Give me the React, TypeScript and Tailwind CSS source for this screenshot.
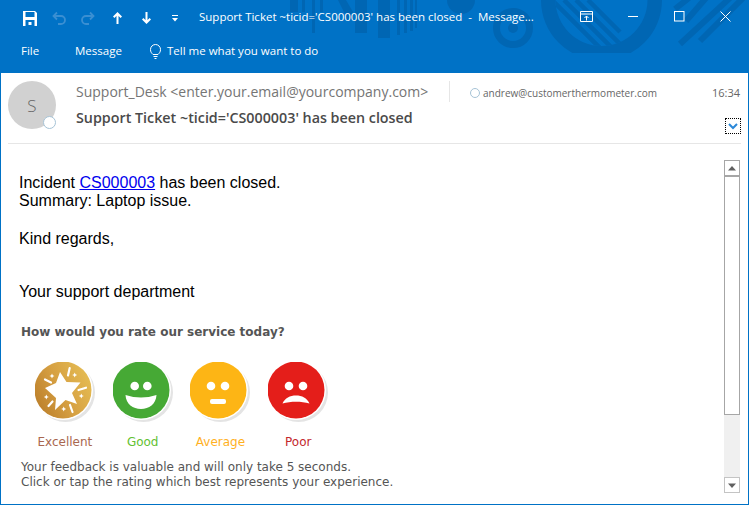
const seg = { fontFamily: '"Open Sans","Noto Sans",sans-serif' };

function Icon({ children, w = 16, h = 16, className = "" }: { children: React.ReactNode; w?: number; h?: number; className?: string }) {
  return (
    <svg width={w} height={h} viewBox={`0 0 ${w} ${h}`} className={className}>
      {children}
    </svg>
  );
}

function Deco() {
  const d = "#0066b3";
  return (
    <svg width="749" height="73" viewBox="0 0 749 73" className="absolute left-0 top-0" fill={d}>
      <defs>
        <clipPath id="bowl"><circle cx="601.500" cy="0" r="46" /></clipPath>
        <clipPath id="outer"><rect x="530" y="0" width="140" height="53" /></clipPath>
      </defs>
      <rect x="290" y="0" width="8" height="12" />
      <rect x="302" y="0" width="3" height="12" />
      <rect x="312" y="0" width="3" height="33" />
      <rect x="320" y="0" width="3" height="12" />
      <path d="M338 0h8l7 12v8h-5z" />
      <rect x="355" y="0" width="12" height="33" />
      <rect x="378" y="0" width="12" height="38" />
      <path d="M397 0h3v35h-3zM404 0h3v33h-3zM410 0h3v31h-3zM415 0h2v28h-2z" />
      <path d="M447 0h28a14 14 0 0 1-28 0z" />
      <circle cx="513" cy="28" r="16.500" fill="none" stroke={d} strokeWidth="7" />
      <circle cx="513" cy="28" r="5" />
      <path fillRule="evenodd" clipPath="url(#outer)" d="M541 0a60.500 60.500 0 0 0 121 0zM555.500 0a46 46 0 0 0 92 0z" />
      <g clipPath="url(#bowl)" fill="none" stroke={d} strokeWidth="4.500">
        <path d="M552 0l50 50M564 0l50 50M576 0l50 50M588 0l32 32" />
      </g>
      <g fill="none" stroke={d} strokeWidth="6">
        <path d="M689 -2l-14 11M706 -2l-20 23M732 -4l-52 48M745 -4l-45 45" />
      </g>
    </svg>
  );
}

function Shadow() {
  return (
    <>
      <circle cx="30.500" cy="30.500" r="29.500" fill="#e4e4e4" />
      <circle cx="28" cy="28" r="30" fill="#fff" />
    </>
  );
}

function Face({ color, children }: { color: string; children: React.ReactNode }) {
  return (
    <svg width="60" height="62" viewBox="0 0 60 62">
      <Shadow />
      <circle cx="28" cy="28" r="28.500" fill={color} />
      {children}
    </svg>
  );
}

function Mini({ x, y }: { x: number; y: number }) {
  return <path d={`M${x} ${y - 2.5}L${x + 0.8} ${y - 0.8}L${x + 2.5} ${y}L${x + 0.8} ${y + 0.8}L${x} ${y + 2.5}L${x - 0.8} ${y + 0.8}L${x - 2.5} ${y}L${x - 0.8} ${y - 0.8}z`} fill="#fff" />;
}

function Star() {
  return (
    <svg width="60" height="62" viewBox="0 0 60 62">
      <defs>
        <linearGradient id="g" x1="0" y1="0.800" x2="1" y2="0.300">
          <stop offset="0" stopColor="#ba7d2a" />
          <stop offset="0.500" stopColor="#d6a042" />
          <stop offset="1" stopColor="#e5bc53" />
        </linearGradient>
      </defs>
      <Shadow />
      <circle cx="28" cy="28" r="28.500" fill="url(#g)" />
      <path d="M25 10L31.500 20L45.500 20.500L37 31L42 42L30.500 38L20 48L21 36L10 26L21 21z" fill="#fff" />
      <g stroke="#fff" strokeWidth="2.200" strokeLinecap="round" fill="none">
        <path d="M34.700 6l-1.700 7.500M10 17.500l6 3M43.500 28l7.500-2.300M35 43l2.500 7M13.500 44l4-4.500" />
      </g>
      <Mini x={17} y={14} />
      <Mini x={39.700} y={13} />
      <Mini x={11.300} y={35} />
      <Mini x={46.300} y={34} />
      <Mini x={28.700} y={47} />
    </svg>
  );
}

function Rating({ label, color, children }: { label: string; color: string; children: React.ReactNode }) {
  return (
    <div className="w-[77.800px] flex flex-col items-center">
      {children}
      <div className="mt-[10px] text-[12px] leading-[16px]" style={{ color }}>
        {label}
      </div>
    </div>
  );
}

export default function App() {
  return (
    <div className="w-[749px] h-[505px] bg-[#0072c6] flex flex-col overflow-hidden" style={seg}>
      <div className="relative h-[73px] shrink-0 text-white">
        <Deco />
        <div className="relative flex items-center h-[36px] pl-[23px]">
          <Icon w={14} h={15}>
            <path d="M0 0h12l2 2v13H0z" fill="#fff" />
            <rect x="2.500" y="1" width="9" height="5" fill="#0072c6" />
            <rect x="2.500" y="9" width="9" height="6" fill="#0072c6" />
            <rect x="5.500" y="11" width="3" height="3" fill="#fff" />
          </Icon>
          <Icon w={14} h={14} className="ml-[15px]">
            <path d="M5 1.500L1.500 5 5 8.500M2 5h7a4 4 0 0 1 0 8H6" fill="none" stroke="#3a8fd2" strokeWidth="1.800" />
          </Icon>
          <Icon w={14} h={14} className="ml-[15px]">
            <path d="M9 1.500L12.500 5 9 8.500M12 5H5a4 4 0 0 0 0 8h3" fill="none" stroke="#3a8fd2" strokeWidth="1.800" />
          </Icon>
          <Icon w={9} h={12} className="ml-[18px]">
            <path d="M4.500 12V1.500M.7 5.300L4.500 1.500l3.800 3.800" fill="none" stroke="#fff" strokeWidth="2" />
          </Icon>
          <Icon w={9} h={12} className="ml-[20px]">
            <path d="M4.500 0v10.500M.7 6.700l3.800 3.800 3.800-3.800" fill="none" stroke="#fff" strokeWidth="2" />
          </Icon>
          <Icon w={6} h={7} className="ml-[21px] mt-[1px]">
            <path d="M0 .500h6" stroke="#fff" strokeWidth="1" />
            <path d="M0 3h6L3 6.500z" fill="#fff" />
          </Icon>
          <div className="ml-[21px] text-[11.500px] leading-[16px] whitespace-nowrap w-[345px] mb-[2px]">
            Support Ticket ~ticid='CS000003' has been closed&nbsp; -&nbsp; Message...
          </div>
          <Icon w={13} h={11} className="ml-[36px] mb-[4px]">
            <path d="M.5.500h12v10H.5zM.5 3h12" fill="none" stroke="#fff" />
            <path d="M6.500 9.500v-4.500M4.500 7l2-2 2 2" fill="none" stroke="#fff" />
          </Icon>
          <Icon w={10} h={11} className="ml-[35px] mb-[4px]">
            <path d="M0 5.500h10" stroke="#fff" />
          </Icon>
          <Icon w={11} h={11} className="ml-[36px] mb-[4px]">
            <rect x=".5" y=".5" width="9.500" height="9.500" fill="none" stroke="#fff" />
          </Icon>
          <Icon w={11} h={11} className="ml-[35px] mb-[4px]">
            <path d="M.5.500l10 10M10.500.500l-10 10" fill="none" stroke="#fff" />
          </Icon>
        </div>
        <div className="relative flex items-center h-[30px] text-[11.500px] leading-[16px]">
          <span className="ml-[21px] w-[54px]">File</span>
          <span className="w-[75px]">Message</span>
          <Icon w={11} h={15}>
            <path d="M3 10.500C1.500 9 .5 8 .5 5.500a5 5 0 0 1 10 0C10.500 8 9.500 9 8 10.500zM3.500 12.500h4M4.500 14.500h2" fill="none" stroke="#fff" />
          </Icon>
          <span className="ml-[6px] whitespace-nowrap">Tell me what you want to do</span>
        </div>
      </div>

      <div className="flex-1 mx-[1px] mb-[1px] bg-white flex flex-col min-h-0">
        <div className="mx-[7px] h-[71px] shrink-0 border-b border-[#e6e6e6] flex relative">
          <div className="relative w-[48px] h-[48px] mt-[8px] rounded-full bg-[#d1d1d1] flex items-center justify-center text-[17px] font-light text-[#666] pt-[1px]">
            S
            <div className="absolute right-0 bottom-0 w-[13px] h-[13px] rounded-full bg-white border border-[#a6c3d6]" />
          </div>
          <div className="ml-[20px] mt-[9px]">
            <div className="text-[14px] leading-[20px] text-[#757575] whitespace-nowrap">Support_Desk &lt;enter.your.email@yourcompany.com&gt;</div>
            <div className="mt-[6px] text-[14.300px] leading-[20px] font-semibold text-[#4a4a4a] whitespace-nowrap">Support Ticket ~ticid='CS000003' has been closed</div>
          </div>
          <div className="absolute left-[441px] top-[8px] w-[1px] h-[21px] bg-[#e6e6e6]" />
          <div className="absolute left-[462px] top-[15px] w-[10px] h-[10px] rounded-full border border-[#a6c3d6]" />
          <div className="absolute left-[475px] top-[13px] text-[10px] leading-[15px] text-[#666] whitespace-nowrap">andrew@customerthermometer.com</div>
          <div className="absolute right-[1px] top-[12px] text-[11px] leading-[16px] text-[#666]">16:34</div>
          <div className="absolute left-[717px] top-[45px] w-[16px] h-[16px] border border-dotted border-black flex items-center justify-center">
            <svg width="10" height="7" viewBox="0 0 10 7"><path d="M1 1l4 4 4-4" fill="none" stroke="#2b88d8" strokeWidth="2" /></svg>
          </div>
        </div>

        <div className="flex-1 flex min-h-0 pt-[16px] pb-[11px]">
          <div className="flex-1 pl-[18px] pt-[14px]">
            <div className="text-[16px] leading-[18px] text-black" style={{ fontFamily: '"Liberation Sans",Arial,sans-serif' }}>
              <div>Incident <a className="text-[#0000ee] underline">CS000003</a> has been closed.</div>
              <div>Summary: Laptop issue.</div>
              <div className="mt-[20px]">Kind regards,</div>
              <div className="mt-[35px]">Your support department</div>
            </div>
            <div style={{ fontFamily: '"DejaVu Sans",Verdana,sans-serif' }}>
              <div className="mt-[23px] ml-[2px] text-[12px] leading-[16px] font-bold text-[#555]">How would you rate our service today?</div>
              <div className="flex mt-[22px] ml-[7px]">
                <Rating label="Excellent" color="#a9674f"><Star /></Rating>
                <Rating label="Good" color="#63c132">
                  <Face color="#46a935">
                    <circle cx="21.700" cy="24" r="4.300" fill="#fff" />
                    <circle cx="34.300" cy="24" r="4.300" fill="#fff" />
                    <path d="M12.500 33Q28 38 43.500 33C43 42 36 47 28 47C20 47 13 42 12.500 33z" fill="#fff" />
                  </Face>
                </Rating>
                <Rating label="Average" color="#ffb11f">
                  <Face color="#fdb515">
                    <circle cx="21" cy="24" r="4.300" fill="#fff" />
                    <circle cx="35" cy="24" r="4.300" fill="#fff" />
                    <rect x="20" y="37" width="16" height="5" rx="2" fill="#fff" />
                  </Face>
                </Rating>
                <Rating label="Poor" color="#c4272d">
                  <Face color="#e41e1a">
                    <circle cx="21" cy="24" r="4.300" fill="#fff" />
                    <circle cx="35" cy="24" r="4.300" fill="#fff" />
                    <path d="M14.500 41.500C17 36 22 33.500 28 33.500S39 36 41.500 41.500C33 39 23 39 14.500 41.500z" fill="#fff" />
                  </Face>
                </Rating>
              </div>
              <div className="mt-[10px] ml-[2px] text-[12px] leading-[15px] text-[#555] whitespace-nowrap">
                <div>Your feedback is valuable and will only take 5 seconds.</div>
                <div>Click or tap the rating which best represents your experience.</div>
              </div>
            </div>
          </div>
          <div className="w-[16px] mr-[8px] bg-[#f0f0f0] flex flex-col">
            <div className="h-[16px] bg-white border border-[#a6a6a6] flex items-center justify-center">
              <svg width="8" height="5"><path d="M4 0l4 4.500H0z" fill="#606060" /></svg>
            </div>
            <div className="h-[239px] bg-white border border-[#a6a6a6]" />
            <div className="flex-1" />
            <div className="h-[16px] bg-white border border-[#c4c4c4] flex items-center justify-center">
              <svg width="8" height="5"><path d="M4 5L8 .500H0z" fill="#606060" /></svg>
            </div>
          </div>
        </div>
      </div>
    </div>
  );
}
